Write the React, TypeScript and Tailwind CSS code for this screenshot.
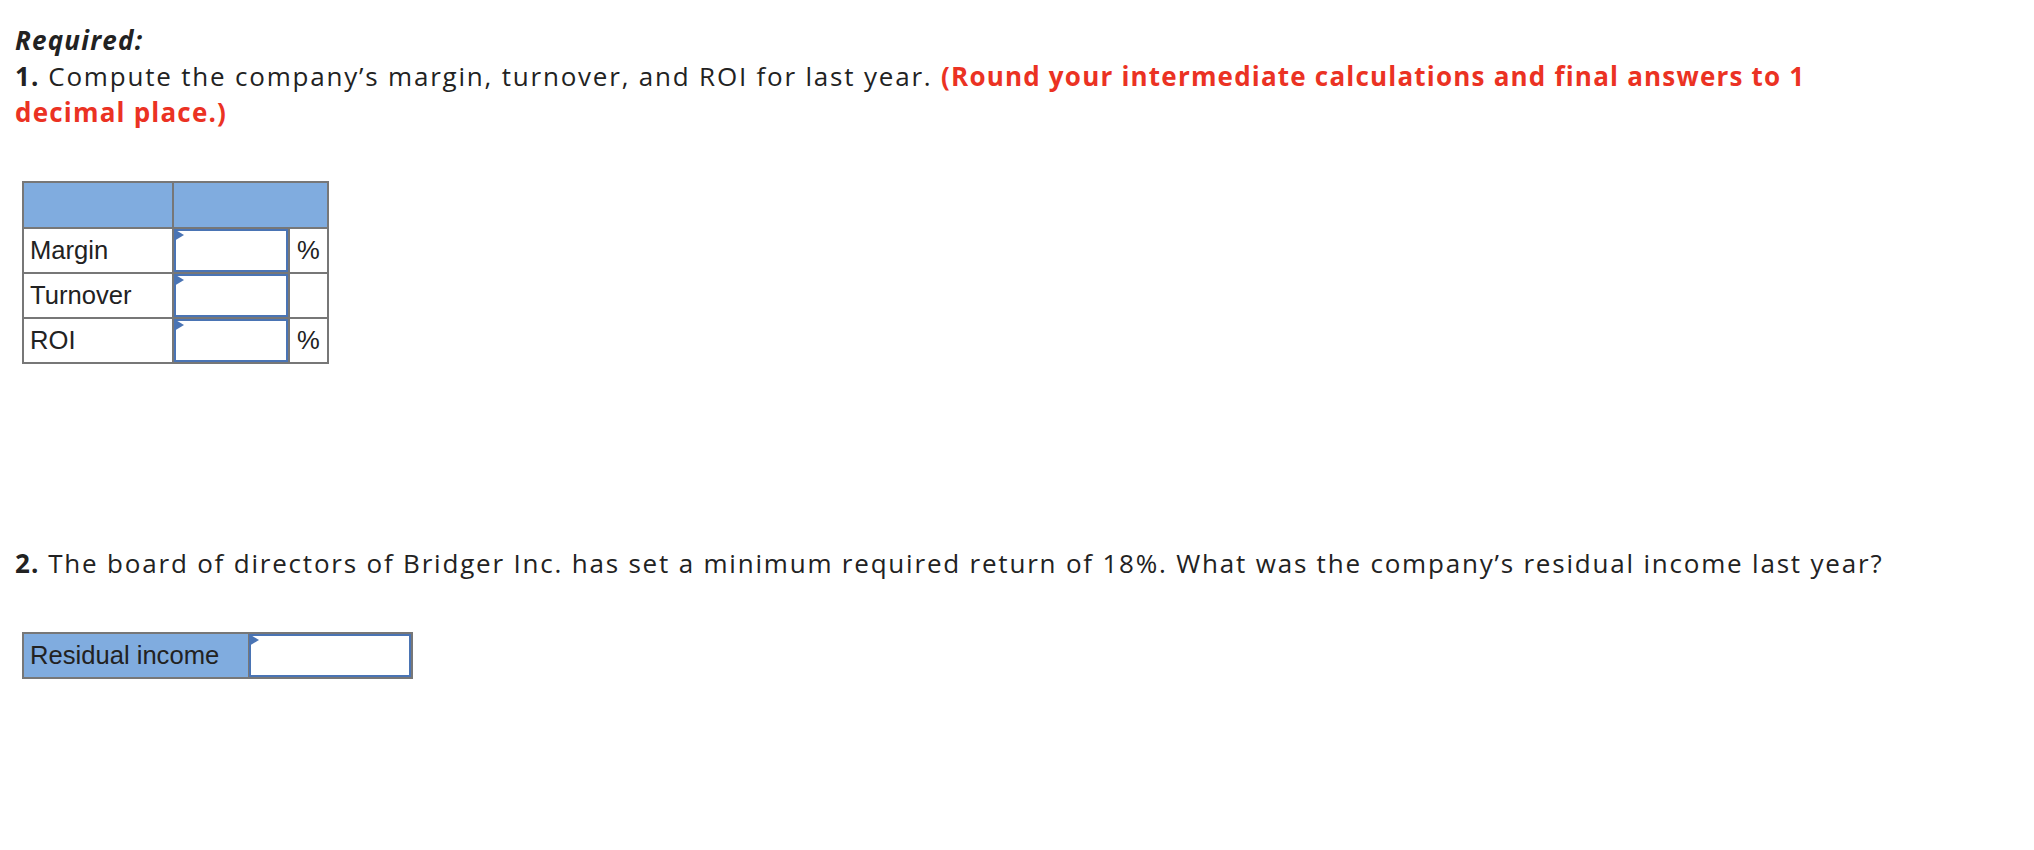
import React from "react";

const qFont = { fontFamily: "'Open Sans', Lato, sans-serif", letterSpacing: "1.8px" };
const boldTrack = { letterSpacing: "1.2px" };

function AnswerBox({ className = "" }: { className?: string }) {
  return (
    <div className={`relative h-full border-2 border-[#4a74b4] bg-white ${className}`}>
      <span className="absolute -left-[2px] -top-[2px] w-0 h-0 border-y-[6px] border-y-transparent border-l-[10px] border-l-[#4a74b4]" />
    </div>
  );
}

const rows = [
  { label: "Margin", unit: "%" },
  { label: "Turnover", unit: "" },
  { label: "ROI", unit: "%" },
];

export default function App() {
  return (
    <div className="min-h-[850px] w-[2034px] bg-white text-[#222] pl-[15px] pt-[22px]">
      <div className="w-[1880px] text-[26px] leading-[36px]" style={qFont}>
        <div className="font-bold italic" style={boldTrack}>Required:</div>
        <div>
          <span className="font-bold" style={boldTrack}>1.</span> Compute the company’s margin, turnover, and ROI for
          last year.{" "}
          <span className="font-bold text-[#eb3223]" style={boldTrack}>
            (Round your intermediate calculations and final answers to 1 decimal place.)
          </span>
        </div>
      </div>

      {/* part 1 table */}
      <div
        className="mt-[51px] ml-[7px] w-[307px] border-l-2 border-t-2 border-[#777]"
        style={{ fontFamily: "'Liberation Sans', Arial, sans-serif" }}
      >
        <div className="flex h-[46px]">
          <div className="w-[150px] border-r-2 border-b-2 border-[#777] bg-[#80acdf]" />
          <div className="flex-1 border-r-2 border-b-2 border-[#777] bg-[#80acdf]" />
        </div>
        {rows.map((r) => (
          <div key={r.label} className="flex h-[45px] text-[25.6px]">
            <div className="w-[150px] flex items-center pl-[6px] border-r-2 border-b-2 border-[#777]">
              {r.label}
            </div>
            <div className="w-[116px] border-r-2 border-b-2 border-[#777]">
              <AnswerBox />
            </div>
            <div className="flex-1 flex items-center justify-center border-r-2 border-b-2 border-[#777]">
              {r.unit}
            </div>
          </div>
        ))}
      </div>

      <div className="mt-[181px] w-[1880px] text-[26px] leading-[36px]" style={qFont}>
        <span className="font-bold" style={boldTrack}>2.</span> The board of directors of Bridger Inc. has set a
        minimum required return of 18%. What was the company’s residual income last year?
      </div>

      {/* part 2 table */}
      <div
        className="mt-[51px] ml-[7px] w-[391px] h-[47px] flex border-2 border-[#777]"
        style={{ fontFamily: "'Liberation Sans', Arial, sans-serif" }}
      >
        <div className="w-[225px] flex items-center pl-[6px] bg-[#80acdf] border-r border-[#777] text-[25.6px]">
          Residual income
        </div>
        <div className="flex-1">
          <AnswerBox />
        </div>
      </div>
    </div>
  );
}
